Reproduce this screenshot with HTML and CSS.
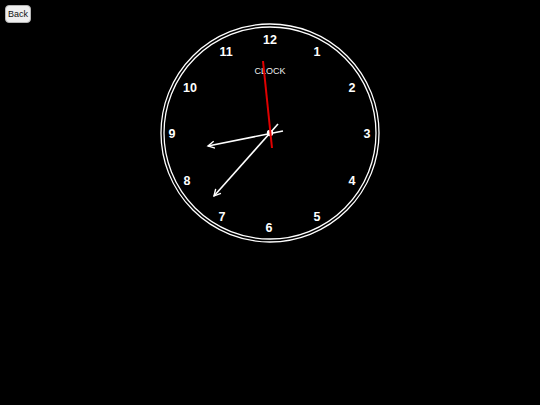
FILE: index.html
```html
<!DOCTYPE html>
<html>
<head>
<meta charset="utf-8">
<link rel="stylesheet" href="styles.css">
</head>
<body>
<div class="page">
  <button class="back">Back</button>
  <svg class="clock" width="230" height="230" viewBox="0 0 230 230">
    <defs>
      <marker id="arrow" markerWidth="10" markerHeight="10" refX="7" refY="4" orient="auto" markerUnits="userSpaceOnUse">
        <path d="M0.5,0.5 L7,4 L0.5,7.5" fill="none" stroke="#fff" stroke-width="1.4"/>
      </marker>
    </defs>
    <circle cx="115" cy="115" r="109" fill="none" stroke="#fff" stroke-width="1.3"/>
    <circle cx="115" cy="115" r="106" fill="none" stroke="#fff" stroke-width="1.3"/>
    <g class="nums">
      <text x="115" y="22">12</text>
      <text x="162" y="34">1</text>
      <text x="197" y="70">2</text>
      <text x="212" y="116">3</text>
      <text x="197" y="163">4</text>
      <text x="162" y="199">5</text>
      <text x="114" y="210">6</text>
      <text x="67" y="199">7</text>
      <text x="32" y="163">8</text>
      <text x="17" y="116">9</text>
      <text x="35" y="70">10</text>
      <text x="71" y="34">11</text>
    </g>
    <text class="label" x="115" y="53">CLOCK</text>
    <line x1="128" y1="113" x2="53" y2="128" stroke="#fff" stroke-width="1.6" marker-end="url(#arrow)"/>
    <line x1="123" y1="106" x2="59" y2="178" stroke="#fff" stroke-width="1.6" marker-end="url(#arrow)"/>
    <circle cx="115" cy="115" r="3.2" fill="#fff"/>
    <line x1="117" y1="130" x2="108" y2="43" stroke="#e00000" stroke-width="2"/>
  </svg>
</div>
</body>
</html>
```
FILE: styles.css
```css
html, body {
  margin: 0;
  padding: 0;
  background: #000;
  width: 540px;
  height: 405px;
  overflow: hidden;
}
.page {
  display: grid;
  width: 540px;
  height: 405px;
}
.back {
  grid-area: 1 / 1;
  justify-self: start;
  align-self: start;
  margin: 5px 0 0 5px;
  width: 26px;
  height: 18px;
  padding: 0;
  font-family: "Liberation Sans", Arial, sans-serif;
  font-size: 9px;
  color: #111;
  background: #efefef;
  border: 1px solid #b5b5b5;
  border-radius: 4px;
}
.clock {
  grid-area: 1 / 1;
  justify-self: center;
  align-self: start;
  margin-top: 18px;
}
.nums text {
  font-family: "Liberation Sans", Arial, sans-serif;
  font-weight: bold;
  font-size: 12.5px;
  fill: #fff;
  text-anchor: middle;
  dominant-baseline: central;
}
.label {
  font-family: "Liberation Sans", Arial, sans-serif;
  font-size: 9px;
  fill: #eee;
  text-anchor: middle;
  dominant-baseline: central;
}
```
